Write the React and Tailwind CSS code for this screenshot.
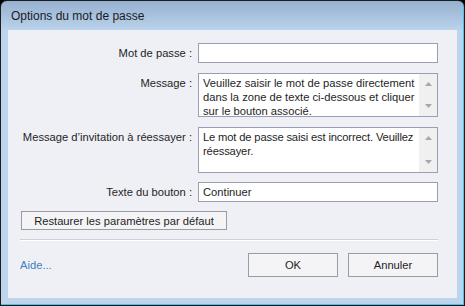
export default function App() {
  const field = 'border border-[#9c9db4] bg-white';
  const label = 'text-right pr-[3px] text-[#1e1e1e] whitespace-nowrap';

  const Scroll = () => (
    <div className="w-[18px] shrink-0 bg-[#f0f0f0] flex flex-col items-center justify-between py-[8px]">
      <svg width="7" height="4" viewBox="0 0 7 4"><path d="M0 4 L3.5 0 L7 4 Z" fill="#a8a8a8" /></svg>
      <svg width="7" height="4" viewBox="0 0 7 4"><path d="M0 0 L3.5 4 L7 0 Z" fill="#a8a8a8" /></svg>
    </div>
  );

  return (
    <div className="w-[465px] h-[306px] bg-black" style={{ fontFamily: '"Liberation Sans", Arial, sans-serif' }}>
      <div className="h-full rounded-t-[7px] border border-[#1c1c1c] bg-[linear-gradient(to_bottom,#96b1cf,#bcd4ec_30px)] shadow-[inset_-1px_-1px_0_#3fc6ec] flex flex-col px-[7px] pb-[7px]">
        <div className="h-[29px] shrink-0 flex items-center pl-[3px] text-[12px] text-[#1a1a26]">Options du mot de passe</div>

        <div className="flex-1 bg-[#eff0f5] text-[11.2px] leading-[14px] pl-[12px] pr-[19px] pt-[13px] flex flex-col">
          <div className="grid grid-cols-[175px_1fr] gap-x-[3px] gap-y-[9px]">
            <div className={`${label} self-center`}>Mot de passe :</div>
            <div className={`${field} h-[20px]`} />

            <div className={`${label} pt-[4px]`}>Message :</div>
            <div className={`${field} h-[44px] flex mt-[1px]`}>
              <div className="flex-1 px-[4px] pt-[2px] text-[#1e1e1e] whitespace-nowrap overflow-hidden">
                Veuillez saisir le mot de passe directement<br />
                dans la zone de texte ci-dessous et cliquer<br />
                sur le bouton associé.
              </div>
              <Scroll />
            </div>

            <div className={`${label} pt-[4px]`}>Message d’invitation à réessayer :</div>
            <div className={`${field} h-[46px] flex mt-[1px]`}>
              <div className="flex-1 px-[4px] pt-[2px] text-[#1e1e1e] whitespace-nowrap overflow-hidden tracking-[-0.15px]">
                Le mot de passe saisi est incorrect. Veuillez<br />
                réessayer.
              </div>
              <Scroll />
            </div>

            <div className={`${label} self-center`}>Texte du bouton :</div>
            <div className={`${field} h-[20px] flex items-center px-[4px] text-[#1e1e1e]`}>Continuer</div>
          </div>

          <div className="mt-[9px] ml-[1px] w-[206px] h-[19px] border border-[#9a9ba3] bg-[#f4f4f6] flex items-center justify-center text-[#1e1e1e]">
            Restaurer les paramètres par défaut
          </div>

          <div className="mt-[9px] h-[2px] border-t border-[#cfd0d6] border-b border-b-white" />

          <div className="mt-[12px] flex items-center">
            <span className="flex-1 text-[#3f7fc2]">Aide...</span>
            <div className="w-[90px] h-[24px] border border-[#9a9ba3] bg-[#f4f4f6] flex items-center justify-center text-[#1e1e1e]">OK</div>
            <div className="ml-[10px] w-[90px] h-[24px] border border-[#9a9ba3] bg-[#f4f4f6] flex items-center justify-center text-[#1e1e1e]">Annuler</div>
          </div>
        </div>
      </div>
    </div>
  );
}
